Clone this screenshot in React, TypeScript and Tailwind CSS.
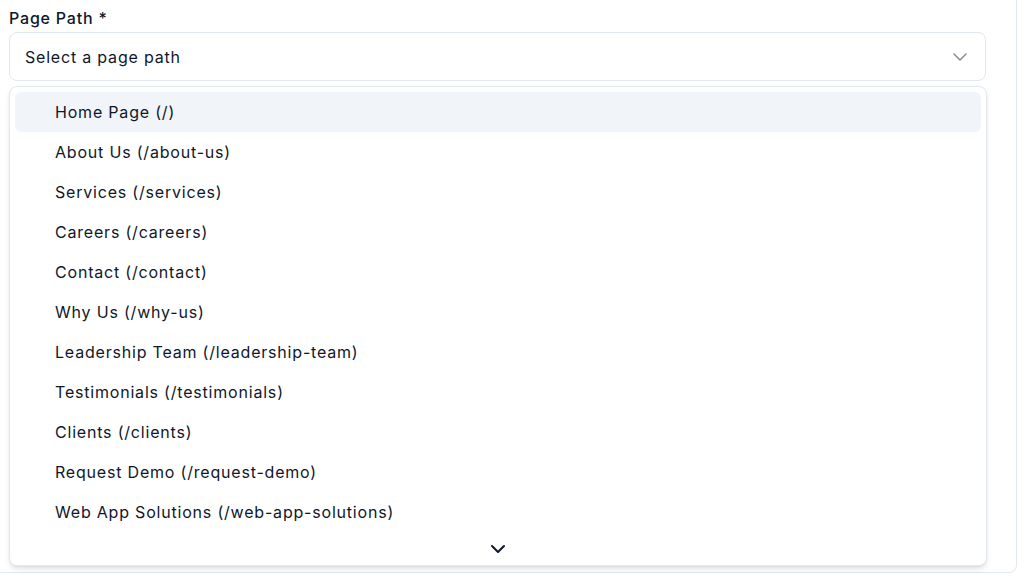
import { ChevronDown } from "lucide-react";

const pages = [
  { name: "Home Page", path: "/" },
  { name: "About Us", path: "/about-us" },
  { name: "Services", path: "/services" },
  { name: "Careers", path: "/careers" },
  { name: "Contact", path: "/contact" },
  { name: "Why Us", path: "/why-us" },
  { name: "Leadership Team", path: "/leadership-team" },
  { name: "Testimonials", path: "/testimonials" },
  { name: "Clients", path: "/clients" },
  { name: "Request Demo", path: "/request-demo" },
  { name: "Web App Solutions", path: "/web-app-solutions" },
];

export default function App() {
  return (
    <div className="h-[586px] w-full bg-white font-['Inter',sans-serif] tracking-[0.05em] text-[#0f172a]">
      <div className="h-[573px] w-[1017px] rounded-br-lg border-r border-b border-slate-200 bg-white pt-[6px] pl-[9px]">
        <label className="mb-[2px] block text-base leading-6 font-medium">
          Page Path *
        </label>
        <button className="flex h-[49px] w-[977px] items-center justify-between rounded-lg border border-slate-200 bg-white pr-[13px] pl-[15px] text-left text-base tracking-[0.05em]">
          <span>Select a page path</span>
          <ChevronDown size={24} strokeWidth={1.5} className="text-slate-900 opacity-50" />
        </button>
        <div className="mt-[5px] w-[978px] rounded-lg border border-slate-200 bg-white px-[5px] pt-[5px] shadow-md">
          <ul>
            {pages.map((p, i) => (
              <li
                key={p.path}
                className={`flex h-10 items-center rounded-md pl-10 text-base ${
                  i === 0 ? "bg-slate-100" : ""
                }`}
              >
                {p.name} ({p.path})
              </li>
            ))}
          </ul>
          <div className="flex h-[33px] items-center justify-center">
            <ChevronDown size={24} strokeWidth={2} className="text-slate-900" />
          </div>
        </div>
      </div>
    </div>
  );
}
